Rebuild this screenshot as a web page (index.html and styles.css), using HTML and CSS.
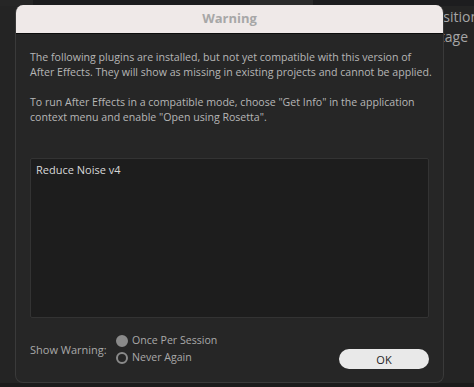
FILE: index.html
```html
<!DOCTYPE html>
<html>
<head>
<meta charset="utf-8">
<link rel="stylesheet" href="styles.css">
</head>
<body>
<div class="app">
  <div class="topstrip">
    <div class="seg s1"></div>
    <div class="seg s2"></div>
    <div class="seg s3"></div>
    <div class="seg s4"></div>
  </div>
  <div class="main">
    <div class="pane"></div>
    <div class="side">
      <div class="side-line">Composition</div>
      <div class="side-line l2">Footage</div>
    </div>
  </div>
  <div class="bottomstrip"></div>
</div>

<div class="dialog">
  <div class="titlebar">Warning</div>
  <div class="body">
    <p class="msg">The following plugins are installed, but not yet compatible with this version of<br>After Effects. They will show as missing in existing projects and cannot be applied.</p>
    <p class="msg">To run After Effects in a compatible mode, choose "Get Info" in the application<br>context menu and enable "Open using Rosetta".</p>
    <div class="list">
      <div class="item">Reduce Noise v4</div>
    </div>
    <div class="footer">
      <div class="label">Show Warning:</div>
      <div class="radios">
        <div class="radio"><span class="dot on"></span><span>Once Per Session</span></div>
        <div class="radio"><span class="dot"></span><span>Never Again</span></div>
      </div>
      <button class="ok">OK</button>
    </div>
  </div>
</div>
</body>
</html>
```

FILE: styles.css
```css
html, body {
  margin: 0;
  padding: 0;
  width: 474px;
  height: 387px;
  overflow: hidden;
  background: #242424;
  font-family: "Open Sans", "Noto Sans", sans-serif;
}

.app {
  width: 474px;
  height: 387px;
  display: flex;
  flex-direction: column;
}

.topstrip {
  display: flex;
  height: 6px;
}
.seg { height: 100%; }
.s1 { width: 33px; background: #262626; }
.s2 { width: 217px; background: #1c1c1e; }
.s3 { width: 63px; background: #2b2b2b; }
.s4 { flex: 1; background: #1d1d1f; }

.main {
  flex: 1;
  display: flex;
}
.pane { flex: 1; }
.side {
  width: 30px;
  overflow: hidden;
  display: flex;
  flex-direction: column;
  align-items: flex-end;
  padding-top: 1px;
}
.side-line {
  color: #a6a6a6;
  font-size: 14px;
  line-height: 20px;
  white-space: nowrap;
  margin-right: -5px;
}
.side-line.l2 { margin-right: 6px; }

.bottomstrip {
  height: 4px;
  background: #1b1b1b;
}

.dialog {
  position: absolute;
  left: 15px;
  top: 5px;
  width: 429px;
  height: 378px;
  box-sizing: border-box;
  border-radius: 8px;
  overflow: hidden;
  background: #262626;
  border: 1px solid #3a3a3a;
  border-top: none;
  display: flex;
  flex-direction: column;
}

.titlebar {
  height: 28px;
  background: #efe9e8;
  border-bottom: 1px solid #0c0c0c;
  color: #a7a7a7;
  font-weight: 700;
  font-size: 13px;
  line-height: 27px;
  text-align: center;
  flex: none;
}

.body {
  flex: 1;
  display: flex;
  flex-direction: column;
  padding: 16px 4px 0 14px;
}

.msg {
  margin: 0 0 15px 0;
  color: #b6b6b6;
  font-size: 10.6px;
  line-height: 15px;
  white-space: nowrap;
}

.list {
  margin-top: 18px;
  margin-right: 10px;
  height: 160px;
  box-sizing: border-box;
  background: #1d1d1d;
  border: 1px solid #333333;
  border-radius: 2px;
  padding: 3px 5px;
}
.item {
  color: #d8d8d8;
  font-size: 11px;
  line-height: 16px;
}

.footer {
  display: flex;
  align-items: center;
  margin-top: 11px;
  margin-right: 10px;
}
.label {
  color: #a9a9a9;
  font-size: 11px;
  width: 86px;
}
.radios {
  display: flex;
  flex-direction: column;
  gap: 2px;
}
.radio {
  display: flex;
  align-items: center;
  gap: 4px;
  color: #a9a9a9;
  font-size: 10.6px;
  line-height: 15px;
}
.dot {
  width: 12px;
  height: 12px;
  box-sizing: border-box;
  border-radius: 50%;
  border: 2px solid #8a8a8a;
}
.dot.on { background: #8a8a8a; }

.ok {
  margin-left: auto;
  margin-top: 20px;
  width: 90px;
  height: 20px;
  border: none;
  border-radius: 10px;
  background: #e9e9e9;
  color: #1e1e1e;
  font-family: "Open Sans", "Noto Sans", sans-serif;
  font-size: 11px;
  padding: 0;
}
```
